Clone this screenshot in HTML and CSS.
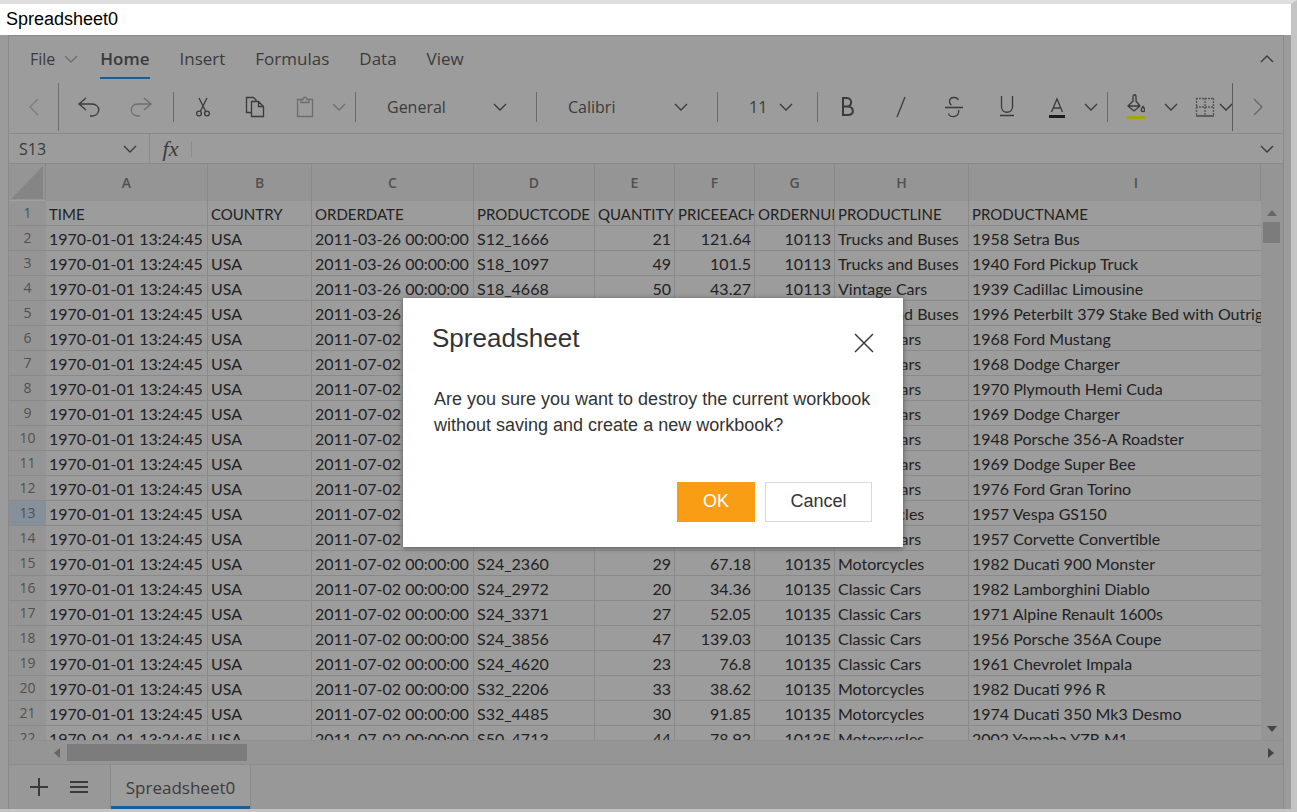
FILE: index.html
```html
<!DOCTYPE html>
<html lang="en">
<head>
<meta charset="utf-8">
<title>Spreadsheet0</title>
<link rel="stylesheet" href="styles.css">
</head>
<body>
<svg class="defs" aria-hidden="true">
  <symbol id="down" viewBox="0 0 14 8"><path d="M1 1l6 6 6-6"/></symbol>
  <symbol id="up" viewBox="0 0 14 8"><path d="M1 7l6-6 6 6"/></symbol>
</svg>
<div class="window">
  <header class="title-bar">Spreadsheet0</header>
  <main class="sheet">
    <nav class="tabs">
      <button class="tab file">File <svg class="chev dim"><use href="#down"/></svg></button>
      <button class="tab active">Home</button>
      <button class="tab">Insert</button>
      <button class="tab">Formulas</button>
      <button class="tab">Data</button>
      <button class="tab">View</button>
      <button class="collapse" aria-label="Collapse toolbar"><svg class="chev"><use href="#up"/></svg></button>
    </nav>
    <div class="toolbar">
      <button class="nav-left" aria-label="Scroll left"><svg width="10" height="18" viewBox="0 0 10 18"><path d="M9 1L1 9l8 8"/></svg></button>
      <div class="tools">
        <button class="tool" aria-label="Undo"><svg width="22" height="22" viewBox="0 0 22 22"><path d="M8 2L1 8l7 6M1 8h13c9 0 9 12 0 12h-2"/></svg></button>
        <button class="tool dim" aria-label="Redo"><svg width="22" height="22" viewBox="0 0 22 22"><path d="M14 2l7 6-7 6M21 8H8c-9 0-9 12 0 12h2"/></svg></button>
        <span class="sep"></span>
        <button class="tool" aria-label="Cut"><svg width="14" height="20" viewBox="0 0 14 20"><path d="M3 1l6.500 13M11 1L4.500 14"/><circle cx="3" cy="16.500" r="2.400"/><circle cx="11" cy="16.500" r="2.400"/></svg></button>
        <button class="tool" aria-label="Copy"><svg width="20" height="22" viewBox="0 0 20 22"><path d="M6.500 16.500h-5v-15h7l3 3M6.500 5.500h7l5 5v10h-12zM13.500 5.500v5h5"/></svg></button>
        <button class="tool paste dim" aria-label="Paste"><svg width="18" height="22" viewBox="0 0 18 22"><path d="M5 3.500H1.500v17h15v-17H13M5 6.500v-3h2c0-3 4-3 4 0h2v3z"/></svg></button>
        <button class="drop dim" aria-label="Paste options"><svg class="chev"><use href="#down"/></svg></button>
        <span class="sep"></span>
        <span class="pick"><select aria-label="Number format"><option>General</option></select><svg class="chev"><use href="#down"/></svg></span>
        <span class="sep"></span>
        <span class="pick"><select aria-label="Font"><option>Calibri</option></select><svg class="chev"><use href="#down"/></svg></span>
        <span class="sep"></span>
        <span class="pick size"><select aria-label="Font size"><option>11</option></select><svg class="chev"><use href="#down"/></svg></span>
        <span class="sep"></span>
        <button class="tool style" aria-label="Bold"><svg width="14" height="20" viewBox="0 0 14 20"><path class="thick" d="M2 1v17h5c7 0 6-8 0-8.500H2h4c6 0 5-8.500 0-8.500z"/></svg></button>
        <button class="tool style" aria-label="Italic"><svg width="12" height="22" viewBox="0 0 12 22"><path d="M10 1L2 21"/></svg></button>
        <button class="tool style" aria-label="Strikethrough"><svg width="20" height="22" viewBox="0 0 20 22"><path d="M1 11.500h18M14.500 4C13 .500 6 .500 5.500 5c0 2 .500 3.500 2 4M14.500 14c2 7-9 9-10 3.500"/></svg></button>
        <button class="tool style" aria-label="Underline"><svg width="16" height="22" viewBox="0 0 16 22"><path d="M2.500 0v11c0 7 11 7 11 0V0M1 19.500h14"/></svg></button>
        <button class="tool color" aria-label="Font color"><svg width="16" height="22" viewBox="0 0 16 22"><path d="M2.500 16L8 3l5.500 13M4.500 12h7"/><path class="ink" d="M0 19h16v3H0z"/></svg></button>
        <button class="drop" aria-label="Font color options"><svg class="chev"><use href="#down"/></svg></button>
        <span class="sep"></span>
        <button class="tool fill" aria-label="Fill color"><svg width="18" height="26" viewBox="0 0 18 26"><path d="M6 8V3c0-3 3-3 3 0v4l4 5-6 5-6-5 5-5M1 12h12M16 12.500c-3 4-2 5 0 5s3-1 0-5z"/><path class="yellow" d="M0 22h18v3H0z"/></svg></button>
        <button class="drop" aria-label="Fill color options"><svg class="chev"><use href="#down"/></svg></button>
        <button class="tool borders" aria-label="Borders"><svg width="20" height="20" viewBox="0 0 20 20"><path class="dots" d="M1 1.500h18M1 10h18M1.500 1v18M10 1v18M18.500 1v18"/><path d="M1 19h18"/></svg></button>
        <button class="drop" aria-label="Border options"><svg class="chev"><use href="#down"/></svg></button>
      </div>
      <button class="nav-right" aria-label="Scroll right"><svg width="10" height="18" viewBox="0 0 10 18"><path d="M1 1l8 8-8 8"/></svg></button>
    </div>
    <div class="formula-bar">
      <input class="name-box" aria-label="Name box" value="S13">
      <button class="name-drop" aria-label="Names"><svg class="chev"><use href="#down"/></svg></button>
      <button class="fx" aria-label="Insert function">fx</button>
      <input class="formula" aria-label="Formula">
      <button class="expand" aria-label="Expand formula bar"><svg class="chev"><use href="#down"/></svg></button>
    </div>
    <div class="grid">
      <div class="cells">
        <table>
          <colgroup><col class="w-row"><col class="w-time"><col class="w-country"><col class="w-time"><col class="w-code"><col class="w-num"><col class="w-num"><col class="w-num"><col class="w-line"><col></colgroup>
          <thead><tr><th class="corner"><svg width="32" height="33" viewBox="0 0 32 33"><path d="M32 0v33H0z"/></svg></th><th>A</th><th>B</th><th>C</th><th>D</th><th>E</th><th>F</th><th>G</th><th>H</th><th class="wide">I</th></tr></thead>
          <tbody id="rows"></tbody>
        </table>
      </div>
      <div class="v-scroll"><svg width="10" height="6"><path d="M5 0l5 6H0z"/></svg><span class="v-thumb"></span><svg class="end" width="10" height="6"><path d="M0 0h10L5 6z"/></svg></div>
    </div>
    <div class="h-scroll"><svg width="6" height="10"><path d="M6 0v10L0 5z"/></svg><span class="h-thumb"></span><svg class="end" width="6" height="10"><path d="M0 0l6 5-6 5z"/></svg></div>
    <footer class="sheet-tabs">
      <button aria-label="Add sheet"><svg width="18" height="18" viewBox="0 0 18 18"><path d="M9 0v18M0 9h18"/></svg></button>
      <button aria-label="List sheets"><svg width="18" height="14" viewBox="0 0 18 14"><path d="M0 2h18M0 7h18M0 12h18"/></svg></button>
      <button class="sheet-tab">Spreadsheet0</button>
    </footer>
  </main>
</div>
<div class="overlay">
  <section class="dialog" role="dialog" aria-labelledby="dialog-title">
    <div class="dialog-head">
      <h1 id="dialog-title">Spreadsheet</h1>
      <button class="close" aria-label="Close"><svg width="20" height="20" viewBox="0 0 20 20"><path d="M1 1l18 18M19 1L1 19"/></svg></button>
    </div>
    <p>Are you sure you want to destroy the current workbook without saving and create a new workbook?</p>
    <div class="actions"><button class="ok">OK</button><button class="cancel">Cancel</button></div>
  </section>
</div>
<script src="rows.js"></script>
</body>
</html>
```
FILE: styles.css
```css
* { box-sizing: border-box; }
body { margin: 0; height: 100vh; overflow: hidden; font-family: "Open Sans", sans-serif; font-size: 16px; color: #3b3b3b; }
button, input, select { font: inherit; color: inherit; background: none; border: 0; border-radius: 0; padding: 0; margin: 0; outline: 0; }
svg { display: block; flex: none; fill: none; stroke: #3a3a3a; stroke-width: 1.3; }
.defs { position: absolute; width: 0; height: 0; }
.window { height: 100vh; display: flex; flex-direction: column; background: #9b9b9b; border-top: 4px solid #dedede; border-right: 6px solid #c4c4c4; border-bottom: 3px solid #c4c4c4; }
.title-bar { flex: none; height: 31px; padding-left: 6px; background: #fff; color: #000; font: 18px/31px "Liberation Sans", Arial, sans-serif; }
.sheet { flex: 1; min-height: 0; display: flex; flex-direction: column; margin: 0 7px 0 8px; border: 1px solid #8a8a8a; border-bottom: 0; background: #9c9c9c; }
.chev { width: 14px; height: 8px; }
.dim, .dim svg { stroke: #6e6e6e; }
.tabs { flex: none; height: 47px; display: flex; align-items: flex-start; gap: 30px; padding: 4px 9px 0 21px; }
.tab { height: 39px; border-bottom: 2px solid transparent; font-size: 17px; line-height: 38px; white-space: nowrap; }
.file { display: flex; align-items: center; gap: 9px; margin-right: -8px; font-size: 16px; }
.active { font-weight: 600; border-color: #1a5c94; }
.collapse { margin-left: auto; height: 37px; }
.toolbar { flex: none; height: 51px; display: flex; border-bottom: 1px solid #8a8a8a; }
.nav-left, .nav-right { flex: none; height: 48px; display: flex; align-items: center; justify-content: center; }
.nav-left { width: 50px; border-right: 1px solid #6e6e6e; }
.nav-left svg { stroke: #7c7c7c; }
.nav-right { width: 51px; border-left: 1px solid #5c5c5c; }
.nav-right svg { stroke: #666; }
.tools { flex: 1; min-width: 0; height: 48px; display: flex; align-items: center; padding-left: 4px; overflow: hidden; }
.tool, .drop { flex: none; height: 40px; display: flex; align-items: center; justify-content: center; }
.tool { width: 52px; }
.drop { width: 20px; }
.paste { width: 48px; }
.style { width: 53px; }
.color { width: 48px; }
.fill { width: 50px; }
.borders { width: 48px; }
.borders + .drop { width: 14px; margin-left: -10px; }
.dots { stroke-dasharray: 2 1; stroke: #555; }
.sep { flex: none; width: 1px; height: 30px; margin: 0 3px 0 6px; background: #6a6a6a; }
.pick { flex: none; position: relative; width: 171px; height: 40px; }
.pick select { appearance: none; width: 100%; height: 40px; padding-left: 28px; }
.pick .chev { position: absolute; right: 23px; top: 16px; pointer-events: none; }
.size { width: 90px; }
.size .chev { right: 18px; }
.thick { stroke-width: 2; }
.ink { fill: #1c1c1c; stroke: none; }
.yellow { fill: #a5a50e; stroke: none; }
.formula-bar { flex: none; height: 30px; display: flex; align-items: center; border-bottom: 1px solid #8a8a8a; }
.name-box { width: 105px; height: 29px; padding-left: 10px; }
.name-drop { width: 36px; height: 29px; border-right: 1px solid #8a8a8a; padding-left: 9px; }
.fx { width: 41px; height: 29px; font: italic 22px/26px "Liberation Serif", "Times New Roman", serif; }
.formula { flex: 1; min-width: 0; height: 16px; border-left: 1px solid #8c8c8c; }
.expand { width: 23px; }
.grid { flex: 1; min-height: 0; display: flex; background: #959595; border-bottom: 1px solid #909090; }
.cells { flex: 1; min-width: 0; overflow: hidden; }
table { width: 100%; table-layout: fixed; border-collapse: separate; border-spacing: 0; background: #9c9c9c; }
.w-row { width: 37px; }
.w-time { width: 162px; }
.w-country { width: 104px; }
.w-code { width: 121px; }
.w-num { width: 80px; }
.w-line { width: 134px; }
th { padding: 0; background: #959595; color: #505050; font-size: 14px; font-weight: 600; }
thead th { height: 37px; border-right: 1px solid #8a8a8a; }
thead .wide { padding-left: 43px; }
.corner { border-bottom: 1px solid #a0a0a0; }
.corner svg { margin: 0 0 0 2px; fill: #858585; stroke: none; }
tbody th { height: 25px; line-height: 24px; vertical-align: top; border-bottom: 1px solid #8a8a8a; font-weight: 400; }
td { height: 25px; padding: 2px 3px 0 3px; border-right: 1px solid #8a8a8a; border-bottom: 1px solid #8a8a8a; overflow: hidden; white-space: nowrap; font: 16px/22px Lato, sans-serif; color: #222; }
tbody tr:first-child td { font-size: 15px; }
td:last-child { border-right: 0; }
.num { text-align: right; }
tbody .selected { background: #86909b; }
.v-scroll { flex: none; width: 22px; display: flex; flex-direction: column; align-items: center; gap: 6px; padding: 46px 1px 8px 0; }
.v-scroll svg, .h-scroll svg { fill: #666; stroke: none; }
.v-thumb { width: 17px; height: 21px; background: #7c7c7c; }
.v-scroll .end { margin-top: auto; fill: #444; }
.h-scroll { flex: none; height: 24px; display: flex; align-items: center; gap: 7px; padding: 0 9px 0 45px; background: #959595; border-bottom: 1px solid #8d8d8d; }
.h-thumb { width: 180px; height: 17px; background: #7c7c7c; }
.h-scroll .end { margin-left: auto; fill: #444; }
.sheet-tabs { flex: none; height: 44px; display: flex; align-items: center; gap: 22px; padding-left: 21px; background: #989898; }
.sheet-tabs svg { stroke-width: 2; }
.sheet-tab { height: 44px; width: 141px; background: #9c9c9c; border: solid #8a8a8a; border-width: 0 1px; box-shadow: inset 0 -3px #1a5c94; font-size: 17px; }
.overlay { position: absolute; inset: 0; display: flex; align-items: center; justify-content: center; padding: 32px 0 0 9px; font-family: "Liberation Sans", Arial, sans-serif; color: #333; }
.dialog { width: 500px; display: flex; flex-direction: column; padding: 24px 29px 25px; background: #fff; box-shadow: 0 1px 5px #555; }
.dialog-head { display: flex; justify-content: space-between; }
h1 { margin: 0; font-size: 26px; line-height: 32px; font-weight: 400; }
.close { margin-top: 11px; height: 20px; }
.close svg { stroke-width: 1.5; }
.dialog p { margin: 32px 0 44px 2px; font-size: 18px; line-height: 26px; }
.actions { display: flex; justify-content: flex-end; gap: 10px; padding-right: 2px; font-size: 18px; }
.actions button { height: 40px; }
.ok { width: 78px; background: #f99d15; color: #fff; }
.cancel { width: 107px; border: 1px solid #dadada; }
```
FILE: rows.js
```js
const early = "2011-03-26 00:00:00";
const late = "2011-07-02 00:00:00";
const records = [
  [early, "S12_1666", "21", "121.64", "10113", "Trucks and Buses", "1958 Setra Bus"],
  [early, "S18_1097", "49", "101.5", "10113", "Trucks and Buses", "1940 Ford Pickup Truck"],
  [early, "S18_4668", "50", "43.27", "10113", "Vintage Cars", "1939 Cadillac Limousine"],
  [early, "", "", "", "", "Trucks and Buses", "1996 Peterbilt 379 Stake Bed with Outrigger"],
  [late, "", "", "", "", "Classic Cars", "1968 Ford Mustang"],
  [late, "", "", "", "", "Classic Cars", "1968 Dodge Charger"],
  [late, "", "", "", "", "Classic Cars", "1970 Plymouth Hemi Cuda"],
  [late, "", "", "", "", "Classic Cars", "1969 Dodge Charger"],
  [late, "", "", "", "", "Classic Cars", "1948 Porsche 356-A Roadster"],
  [late, "", "", "", "", "Classic Cars", "1969 Dodge Super Bee"],
  [late, "", "", "", "", "Classic Cars", "1976 Ford Gran Torino"],
  [late, "", "", "", "", "Motorcycles", "1957 Vespa GS150"],
  [late, "", "", "", "", "Classic Cars", "1957 Corvette Convertible"],
  [late, "S24_2360", "29", "67.18", "10135", "Motorcycles", "1982 Ducati 900 Monster"],
  [late, "S24_2972", "20", "34.36", "10135", "Classic Cars", "1982 Lamborghini Diablo"],
  [late, "S24_3371", "27", "52.05", "10135", "Classic Cars", "1971 Alpine Renault 1600s"],
  [late, "S24_3856", "47", "139.03", "10135", "Classic Cars", "1956 Porsche 356A Coupe"],
  [late, "S24_4620", "23", "76.8", "10135", "Classic Cars", "1961 Chevrolet Impala"],
  [late, "S32_2206", "33", "38.62", "10135", "Motorcycles", "1982 Ducati 996 R"],
  [late, "S32_4485", "30", "91.85", "10135", "Motorcycles", "1974 Ducati 350 Mk3 Desmo"],
  [late, "S50_4713", "44", "78.92", "10135", "Motorcycles", "2002 Yamaha YZR M1"]
];
const rows = [["TIME", "COUNTRY", "ORDERDATE", "PRODUCTCODE", "QUANTITY", "PRICEEACH", "ORDERNUMBER", "PRODUCTLINE", "PRODUCTNAME"]]
  .concat(records.map(r => ["1970-01-01 13:24:45", "USA", ...r]));
const body = document.getElementById("rows");
rows.forEach((row, index) => {
  const tr = body.insertRow();
  const head = document.createElement("th");
  head.textContent = index + 1;
  if (index === 12) head.className = "selected";
  tr.append(head);
  row.forEach((text, column) => {
    const cell = tr.insertCell();
    cell.textContent = text;
    if (index > 0 && column > 3 && column < 7) cell.className = "num";
  });
});
```
